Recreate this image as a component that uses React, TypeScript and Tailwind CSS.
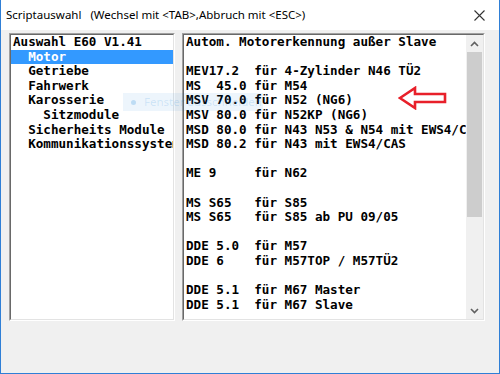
const leftItems = [
  { text: "Auswahl E60 V1.41", indent: 0 },
  { text: "Motor", indent: 2, selected: true },
  { text: "Getriebe", indent: 2 },
  { text: "Fahrwerk", indent: 2 },
  { text: "Karosserie", indent: 2 },
  { text: "Sitzmodule", indent: 4 },
  { text: "Sicherheits Module", indent: 2 },
  { text: "Kommunikationssysteme", indent: 2 },
];

const rightLines = [
  "Autom. Motorerkennung außer Slave",
  "",
  "MEV17.2  für 4-Zylinder N46 TÜ2",
  "MS  45.0 für M54",
  "MSV 70.0 für N52 (NG6)",
  "MSV 80.0 für N52KP (NG6)",
  "MSD 80.0 für N43 N53 & N54 mit EWS4/CAS",
  "MSD 80.2 für N43 mit EWS4/CAS",
  "",
  "ME 9     für N62",
  "",
  "MS S65   für S85",
  "MS S65   für S85 ab PU 09/05",
  "",
  "DDE 5.0  für M57",
  "DDE 6    für M57TOP / M57TÜ2",
  "",
  "DDE 5.1  für M67 Master",
  "DDE 5.1  für M67 Slave",
];

const mono =
  "font-['DejaVu_Sans_Mono',monospace] font-bold text-[12.6px] leading-[14.6px] whitespace-pre";

function Sunken({ className, children }: { className: string; children: React.ReactNode }) {
  return (
    <div className={`border border-t-[#a0a0a0] border-l-[#a0a0a0] border-b-white border-r-white ${className}`}>
      <div className="h-full border border-t-[#696969] border-l-[#696969] border-b-[#e3e3e3] border-r-[#e3e3e3] bg-white overflow-hidden flex">
        {children}
      </div>
    </div>
  );
}

function Chevron({ up }: { up?: boolean }) {
  return (
    <svg width="9" height="6" viewBox="0 0 9 6">
      <path
        d={up ? "M1 5 L4.5 1.5 L8 5" : "M1 1 L4.5 4.5 L8 1"}
        fill="none"
        stroke="#606060"
        strokeWidth="1.6"
      />
    </svg>
  );
}

export default function App() {
  return (
    <div className="w-[500px] h-[374px] flex flex-col border border-t-0 border-[#2f7fd6] bg-[#f0f0f0] relative font-['Noto_Sans',sans-serif]">
      <div className="h-[30px] bg-white flex items-center pl-[5px] pr-[14px] text-[11.5px] text-black">
        <span>Scriptauswahl</span>
        <span className="ml-[9px]">(Wechsel mit &lt;TAB&gt;,Abbruch mit &lt;ESC&gt;)</span>
        <svg className="ml-auto" width="11" height="11" viewBox="0 0 11 11">
          <path d="M0.5 0.5 L10.5 10.5 M10.5 0.5 L0.5 10.5" stroke="#333" strokeWidth="1.1" />
        </svg>
      </div>

      <div className="flex-1 flex gap-[7px] pl-[8px] pt-[3px]">
        <Sunken className="w-[166px] h-[288px]">
          <div className={`${mono} flex-1 text-black`}>
            {leftItems.map((it) => (
              <div
                key={it.text}
                className={`pl-[2px] ${it.selected ? "bg-[#3399ff] text-white" : ""}`}
              >
                {" ".repeat(it.indent) + it.text}
              </div>
            ))}
          </div>
        </Sunken>

        <Sunken className="w-[303px] h-[288px]">
          <div className={`${mono} flex-1 pl-[2px] text-black overflow-hidden`}>
            {rightLines.map((l, i) => (
              <div key={i}>{l || " "}</div>
            ))}
          </div>
          <div className="w-[17px] bg-[#f0f0f0] flex flex-col items-center">
            <div className="h-[17px] flex items-center justify-center">
              <Chevron up />
            </div>
            <div className="w-[15px] h-[165px] bg-[#cdcdcd]" />
            <div className="flex-1" />
            <div className="h-[17px] flex items-center justify-center">
              <Chevron />
            </div>
          </div>
        </Sunken>
      </div>

      {/* faded "Fenster ausschneiden" hint */}
      <div className="absolute left-[122px] top-[93px] w-[140px] h-[18px] bg-[#0078d7]/[0.07] flex items-center pl-[8px] gap-[8px] text-[11.5px] whitespace-nowrap overflow-hidden text-[#0078d7]/15">
        <span className="w-[5px] h-[5px] shrink-0 rounded-full bg-[#0078d7]/20" />
        <span>Fenster ausschneiden</span>
      </div>

      {/* red arrow */}
      <svg className="absolute left-[397px] top-[86px]" width="50" height="24" viewBox="0 0 50 24">
        <path
          d="M2 12 L17 2 L17 8 L47 8 L47 16 L17 16 L17 22 Z"
          fill="none"
          stroke="#e8202a"
          strokeWidth="2.6"
          strokeLinejoin="miter"
        />
      </svg>
    </div>
  );
}
